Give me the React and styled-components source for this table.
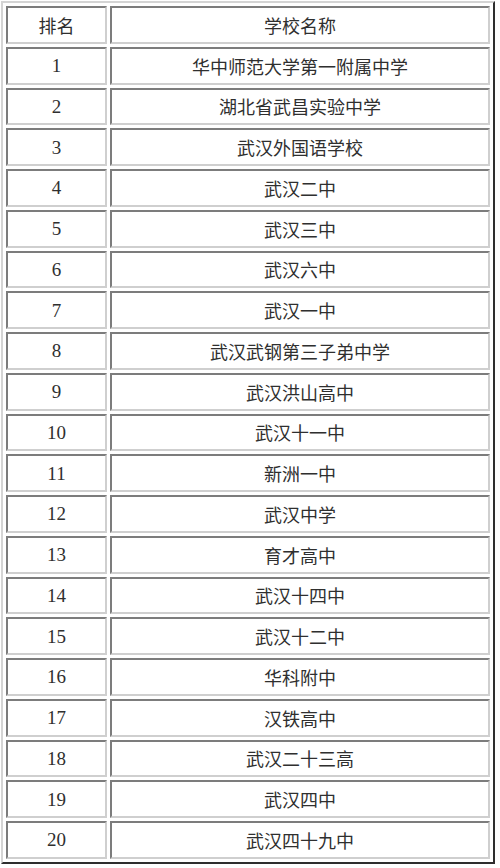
import React from 'react';
import styled, { createGlobalStyle } from 'styled-components';

const GlobalStyle = createGlobalStyle`
  html, body {
    margin: 0;
    padding: 0;
    background: #ffffff;
  }
`

const Page = styled.div`
  width: 500px;
  height: 868px;
  padding: 1px 0 0 1px;
  box-sizing: border-box;
  background: #fff;
`

const Table = styled.table`
  width: 494px;
  border-collapse: separate;
  border-spacing: 3px;
  border-style: solid;
  border-width: 2px;
  border-color: #d4d4d4 #2e2e2e #2e2e2e #d4d4d4;
  table-layout: fixed;
`

const Cell = styled.td`
  box-sizing: border-box;
  height: 37.75px;
  padding: 0;
  text-align: center;
  vertical-align: middle;
  color: #2f2f2f;
  border-style: solid;
  border-width: 2px;
  border-color: #7c7c7c #cfcfcf #cfcfcf #7c7c7c;
  font-family: ${p => (p.$num ? '"Liberation Serif", "Times New Roman", serif' : '"Noto Sans CJK SC", "Noto Sans", sans-serif')};
  font-size: ${p => (p.$num ? '19px' : '18px')};
  line-height: 1;
`

const RankCol = styled.col`
  width: 101px;
`

const schools = [
  '华中师范大学第一附属中学',
  '湖北省武昌实验中学',
  '武汉外国语学校',
  '武汉二中',
  '武汉三中',
  '武汉六中',
  '武汉一中',
  '武汉武钢第三子弟中学',
  '武汉洪山高中',
  '武汉十一中',
  '新洲一中',
  '武汉中学',
  '育才高中',
  '武汉十四中',
  '武汉十二中',
  '华科附中',
  '汉铁高中',
  '武汉二十三高',
  '武汉四中',
  '武汉四十九中',
];

export default function App() {
  return (
    <Page>
      <GlobalStyle />
      <Table>
        <colgroup>
          <RankCol />
          <col />
        </colgroup>
        <tbody>
          <tr>
            <Cell>排名</Cell>
            <Cell>学校名称</Cell>
          </tr>
          {schools.map((name, i) => (
            <tr key={name}>
              <Cell $num>{i + 1}</Cell>
              <Cell>{name}</Cell>
            </tr>
          ))}
        </tbody>
      </Table>
    </Page>
  );
}
